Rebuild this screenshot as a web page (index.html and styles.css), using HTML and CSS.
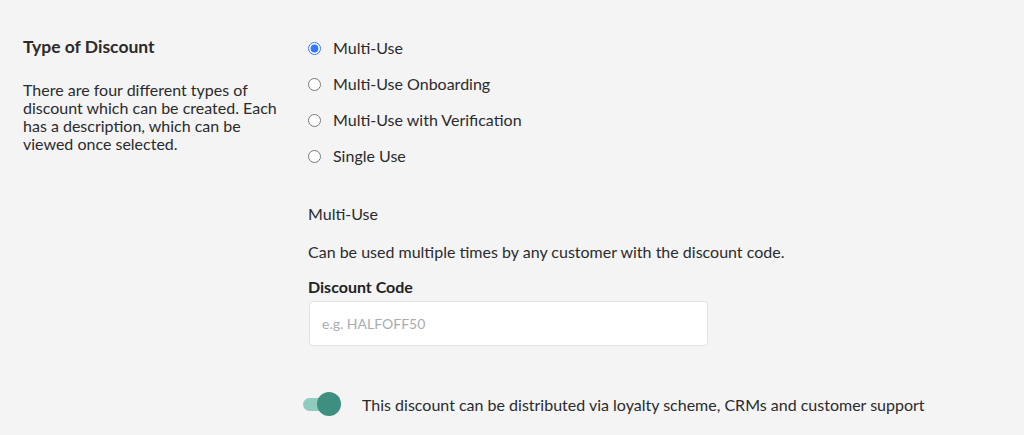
FILE: index.html
```html
<!DOCTYPE html>
<html lang="en">
<head>
  <meta charset="UTF-8" />
  <title>Type of Discount</title>
  <link rel="stylesheet" href="styles.css">
</head>
<body>
  <div class="section">
    <div class="side">
      <h2>Type of Discount</h2>
      <p>There are four different types of discount which can be created. Each has a description, which can be viewed once selected.</p>
    </div>

    <div class="main">
      <div class="radios">
        <label class="radio"><input type="radio" name="type" checked> Multi-Use</label>
        <label class="radio"><input type="radio" name="type"> Multi-Use Onboarding</label>
        <label class="radio"><input type="radio" name="type"> Multi-Use with Verification</label>
        <label class="radio"><input type="radio" name="type"> Single Use</label>
      </div>

      <div class="desc-title">Multi-Use</div>
      <div class="desc">Can be used multiple times by any customer with the discount code.</div>

      <label class="field-label" for="code">Discount Code</label>
      <input class="text-input" id="code" type="text" placeholder="e.g. HALFOFF50">

      <div class="toggle-row">
        <span class="toggle"><span class="knob"></span></span>
        <span>This discount can be distributed via loyalty scheme, CRMs and customer support</span>
      </div>
    </div>
  </div>
</body>
</html>
```

FILE: styles.css
```css
body {
  margin: 0;
  background: #f4f4f4;
  color: #2b2b2b;
  font-family: Lato, 'Open Sans', sans-serif;
  font-size: 16px;
}
.section {
  display: flex;
  padding: 36px 0 0 23px;
}
.side {
  width: 258px;
  margin-right: 27px;
}
.side h2 {
  margin: 0;
  font-size: 17.5px;
  font-weight: 700;
  line-height: 22px;
}
.side p {
  margin: 23px 0 0;
  line-height: 18px;
}
.main {
  display: flex;
  flex-direction: column;
  margin-top: 2px;
}
.radios {
  display: flex;
  flex-direction: column;
  gap: 16px;
}
.radio {
  display: flex;
  align-items: center;
  height: 20px;
  line-height: 20px;
}
.radio input {
  width: 13px;
  height: 13px;
  margin: 0 12px 0 0;
  accent-color: #3478f6;
}
.desc-title {
  margin-top: 38px;
  line-height: 20px;
}
.desc {
  margin-top: 18px;
  line-height: 20px;
}
.field-label {
  margin-top: 15px;
  font-weight: 700;
  line-height: 20px;
  color: #222;
}
.text-input {
  box-sizing: border-box;
  width: 399px;
  height: 45px;
  margin: 4px 0 0 1px;
  padding: 0 12px;
  background: #fff;
  border: 1px solid #e2e2e2;
  border-radius: 4px;
  font-family: Lato, sans-serif;
  font-size: 14px;
  color: #333;
}
.text-input::placeholder {
  color: #a9adb3;
}
.toggle-row {
  display: flex;
  align-items: center;
  height: 25px;
  margin-top: 46px;
  margin-left: -5px;
}
.toggle {
  position: relative;
  display: inline-block;
  width: 26px;
  height: 13px;
  margin-right: 33px;
  background: #8fcbbf;
  border-radius: 7px;
}
.knob {
  position: absolute;
  top: -6px;
  right: -12px;
  width: 24px;
  height: 24px;
  background: #3e8f80;
  border-radius: 50%;
}
```
